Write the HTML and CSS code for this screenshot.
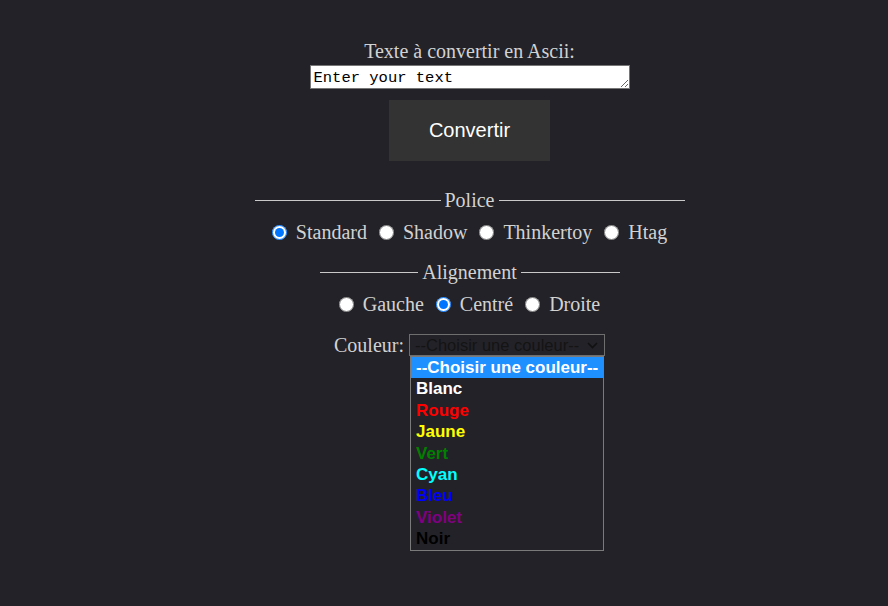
FILE: index.html
```html
<!DOCTYPE html>
<html lang="fr">
<head>
<meta charset="utf-8">
<title>Ascii Art</title>
<link rel="stylesheet" href="styles.css">
</head>
<body>
<main class="page">
  <label class="title" for="txt">Texte à convertir en Ascii:</label>
  <textarea id="txt" class="text-input" rows="1">Enter your text</textarea>
  <button class="convert" type="button">Convertir</button>

  <section class="group group-police">
    <div class="group-head"><span>Police</span></div>
    <div class="options">
      <label class="opt"><input type="radio" name="font" checked><span>Standard</span></label>
      <label class="opt"><input type="radio" name="font"><span>Shadow</span></label>
      <label class="opt"><input type="radio" name="font"><span>Thinkertoy</span></label>
      <label class="opt"><input type="radio" name="font"><span>Htag</span></label>
    </div>
  </section>

  <section class="group group-align">
    <div class="group-head"><span>Alignement</span></div>
    <div class="options">
      <label class="opt"><input type="radio" name="align"><span>Gauche</span></label>
      <label class="opt"><input type="radio" name="align" checked><span>Centré</span></label>
      <label class="opt"><input type="radio" name="align"><span>Droite</span></label>
    </div>
  </section>

  <div class="color-row">
    <span class="color-label">Couleur:</span>
    <div class="select">
      <span class="select-value">--Choisir une couleur--</span>
      <svg class="chevron" width="11" height="7" viewBox="0 0 11 7"><path d="M1 1 L5.5 5.5 L10 1" fill="none" stroke="#111" stroke-width="1.6"/></svg>
      <ul class="menu">
        <li class="item item-active">--Choisir une couleur--</li>
        <li class="item c-white">Blanc</li>
        <li class="item c-red">Rouge</li>
        <li class="item c-yellow">Jaune</li>
        <li class="item c-green">Vert</li>
        <li class="item c-cyan">Cyan</li>
        <li class="item c-blue">Bleu</li>
        <li class="item c-purple">Violet</li>
        <li class="item c-black">Noir</li>
      </ul>
    </div>
  </div>
</main>
</body>
</html>
```
FILE: styles.css
```css
html, body {
  margin: 0;
  background: #232228;
}
body {
  font-family: "Liberation Serif", "Times New Roman", serif;
  font-size: 20px;
  color: #d2d2d2;
  height: 606px;
  overflow: hidden;
}
.page {
  display: flex;
  flex-direction: column;
  align-items: center;
  padding: 40px 0 0 51px;
}
.title {
  line-height: 23px;
}
.text-input {
  margin-top: 2px;
  width: 320px;
  height: 24px;
  box-sizing: border-box;
  padding: 3px 3px 1px;
  border: 1px solid #767676;
  background: #fff;
  color: #000;
  font-family: "Liberation Mono", "DejaVu Sans Mono", monospace;
  font-size: 15.5px;
  line-height: 18px;
  overflow: hidden;
}
.convert {
  margin-top: 11px;
  width: 161px;
  height: 61px;
  border: none;
  background: #333333;
  color: #ffffff;
  font-family: "Liberation Sans", Arial, sans-serif;
  font-size: 20px;
  padding: 0;
}
.group {
  display: flex;
  flex-direction: column;
  align-items: center;
}
.group-police {
  margin-top: 28px;
  width: 430px;
}
.group-align {
  margin-top: 17px;
  width: 300px;
}
.group-head {
  display: flex;
  align-items: center;
  gap: 4px;
  width: 100%;
  line-height: 23px;
}
.group-head::before,
.group-head::after {
  content: "";
  flex: 1;
  height: 1px;
  background: #c9c9c9;
}
.options {
  margin-top: 9px;
  display: flex;
  align-items: center;
  gap: 12px;
  line-height: 23px;
}
.opt {
  display: flex;
  align-items: center;
  gap: 9px;
}
.opt input {
  margin: 0;
  width: 15px;
  height: 15px;
}
.color-row {
  margin-top: 18px;
  display: flex;
  align-items: center;
  gap: 5px;
}
.color-label {
  line-height: 22px;
}
.select {
  position: relative;
  width: 196px;
  height: 22px;
  box-sizing: border-box;
  border: 1px solid #6e6e6e;
  padding: 0 6px 0 5px;
  display: flex;
  align-items: center;
  justify-content: space-between;
  font-family: "Liberation Sans", Arial, sans-serif;
  font-size: 16.5px;
  color: #141414;
}
.select-value {
  white-space: nowrap;
}
.chevron {
  display: block;
  flex-shrink: 0;
}
.menu {
  position: absolute;
  top: 21px;
  left: 0;
  width: 194px;
  box-sizing: border-box;
  margin: 0;
  padding: 0;
  list-style: none;
  background: #232228;
  border: 1px solid #7a7a7a;
  font-weight: bold;
  font-size: 17px;
}
.item {
  height: 21.4px;
  line-height: 21.4px;
  padding: 0 5px;
  white-space: nowrap;
}
.item-active { background: #1e90ff; color: #ffffff; }
.c-white { color: #ffffff; }
.c-red { color: #ff0000; }
.c-yellow { color: #ffff00; }
.c-green { color: #008000; }
.c-cyan { color: #00ffff; }
.c-blue { color: #0000ff; }
.c-purple { color: #800080; }
.c-black { color: #000000; }
```
